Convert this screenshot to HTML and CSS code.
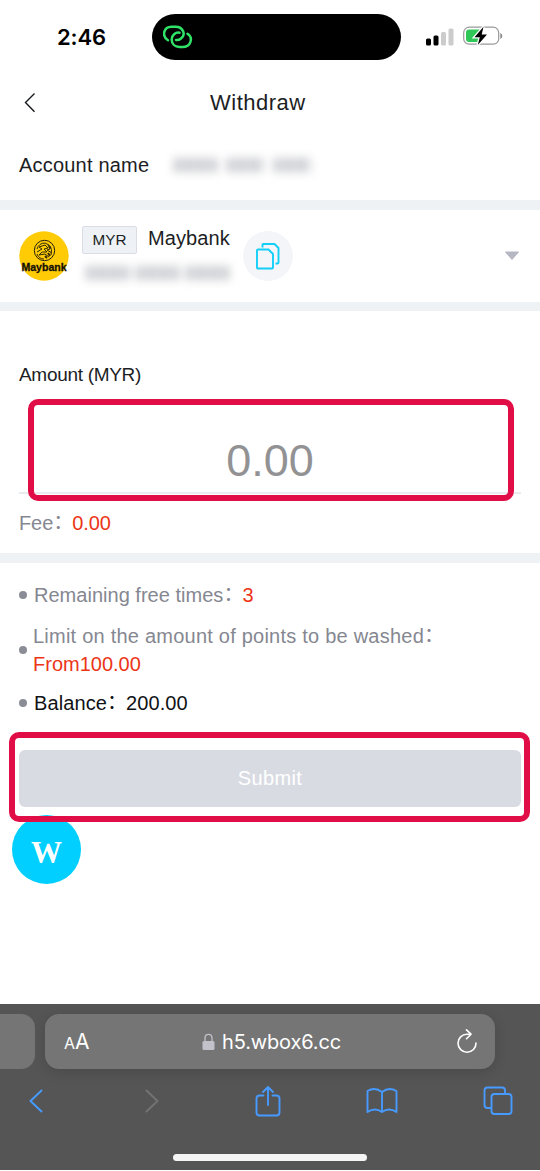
FILE: index.html
```html
<!DOCTYPE html>
<html lang="en">
<head>
<meta charset="utf-8">
<title>Withdraw</title>
<link rel="stylesheet" href="styles.css">
</head>
<body>
<div class="phone">
  <header class="status">
    <span class="time">2:46</span>
    <div class="island">
      <svg width="30" height="24" viewBox="0 0 30 24" fill="none" stroke="#30e266" stroke-width="2.500" stroke-linecap="round">
        <path d="M5 15.300 C-1.500 11 .5 1.700 8.500 1.700 H12.500 C20.500 1.700 23 10 18 13.500 C16.500 14.800 14.500 15.200 13 15"/>
        <path d="M16.500 7.700 C12.500 7 8.700 10.200 8.700 14.500 C8.700 19 12 22 16.500 22 H19.500 C28 22 30.500 12.500 24.500 8.700"/>
      </svg>
    </div>
    <svg class="signal" width="28" height="18" viewBox="0 0 28 18">
      <rect x="0" y="10.500" width="5" height="7" rx="1.500"/><rect x="7.500" y="7.500" width="5" height="10" rx="1.500"/>
      <g fill="#ccc"><rect x="15" y="4" width="5" height="13.500" rx="1.500"/><rect x="22.500" y="0.500" width="5" height="17" rx="1.500"/></g>
    </svg>
    <svg class="battery" width="40" height="22" viewBox="0 0 40 22">
      <rect x=".7" y="2.200" width="35" height="17" rx="5.500" fill="none" stroke="#999" stroke-width="1.200"/>
      <path d="M37.300 8 Q39.300 9 39.300 11 T37.300 14Z" fill="#888"/>
      <path d="M6 4.500 H17 V17 H6 Q3 17 3 14 V7.500 Q3 4.500 6 4.500Z" fill="#30c759"/>
      <path d="M20.500 1.800 L11.500 12.300 H16.800 L14.800 20 L24 9.600 H18.700Z" fill="#000" stroke="#fff" stroke-width="2.600" paint-order="stroke"/>
    </svg>
  </header>

  <nav class="titlebar">
    <svg class="back" width="14" height="20" viewBox="0 0 14 20"><path d="M11.500 .5 L2.500 9.500 L11.500 18.700" fill="none" stroke="#15171c" stroke-width="1.400"/></svg>
    <h1>Withdraw</h1>
  </nav>

  <section class="account">
    <span class="account-label">Account name</span>
    <span class="redacted name"><i></i><i></i><i></i></span>
  </section>

  <section class="bank">
    <svg class="bank-logo" width="50" height="50" viewBox="0 0 50 50">
      <circle cx="25" cy="25" r="24.700" fill="#ffcb05"/>
      <circle cx="25.500" cy="19.500" r="10.200" fill="none" stroke="#242010" stroke-width="1"/>
      <g fill="none" stroke="#332a08" stroke-width="1">
        <path d="M18 18 Q20 12 26 12 L30 14 Q34 18 32 24 M18 21 L23 18 L20 16 L26 14 L29 17 L25 18 L28 21 L23 21 L20 24 L26 23 L30 26 M29 14 L31 18 L28 19 L33 22 M18 23 Q20 28 25 28"/>
        <path d="M30 17 L32 16 M29 22 L31 25 M26 25 L28 27" stroke-width="2"/>
      </g>
      <text x="25" y="39.700" text-anchor="middle" textLength="45" lengthAdjust="spacingAndGlyphs" class="logo-text">Maybank</text>
    </svg>
    <div class="bank-info">
      <div class="bank-line"><span class="currency">MYR</span><span class="bank-name">Maybank</span></div>
      <span class="redacted number"><i></i><i></i><i></i></span>
    </div>
    <div class="copy">
      <svg width="24" height="27" viewBox="0 0 24 27" fill="none" stroke="#12cff8" stroke-width="1.900" stroke-linejoin="round">
        <path d="M1 7.500 Q1 6.500 2 6.500 H12.500 L17 11 V24.500 Q17 25.500 16 25.500 H2 Q1 25.500 1 24.500Z"/>
        <path d="M6.500 4.500 V2 Q6.500 1 7.500 1 H18.500 L22.500 5 V19.500 Q22.500 20.500 21.500 20.500 H19.500"/>
      </svg>
    </div>
    <svg class="caret" width="16" height="10" viewBox="0 0 16 10"><path d="M1.500 1 H14.500 L8 8.500Z" fill="#b5b7c2" stroke="#b5b7c2" stroke-linejoin="round"/></svg>
  </section>

  <section class="amount">
    <div class="amount-label">Amount (MYR)</div>
    <div class="amount-value">0.00<div class="frame frame-amount"></div></div>
    <div class="fee">Fee<span class="colon">：</span><b>0.00</b></div>
  </section>

  <main class="details">
    <ul>
      <li class="row-free"><span>Remaining free times<span class="colon">：</span><b>3</b></span></li>
      <li class="row-limit"><span><span class="limit-text">Limit on the amount of points to be washed</span><span class="colon">：</span><br><b class="from">From100.00</b></span></li>
      <li class="row-balance"><span>Balance<span class="colon">：</span><span class="balance">200.00</span></span></li>
    </ul>
    <div class="submit">Submit<div class="frame frame-submit"></div></div>
    <div class="float">W</div>
  </main>

  <footer class="browser">
    <div class="tabs">
      <div class="tab-prev"></div>
      <div class="address">
        <span class="aa"><small>A</small>A</span>
        <span class="url">
          <svg width="13" height="18" viewBox="0 0 13 18"><rect x=".5" y="8" width="12" height="9" rx="1.500" fill="#c3c1c9"/><path d="M3 8 V5 Q3 1.300 6.500 1.300 T10 5 V8" fill="none" stroke="#c3c1c9" stroke-width="1.300"/></svg>
          <span>h5.wbox6.cc</span>
        </span>
        <svg class="reload" width="22" height="25" viewBox="0 0 22 25" fill="none" stroke="#fff" stroke-width="1.600" stroke-linecap="round" stroke-linejoin="round"><path d="M14 5.200 H11 A9 9 0 1 0 20 14"/><path d="M10.500 .9 L15 5.200 L10.500 9.700"/></svg>
      </div>
    </div>
    <div class="toolbar">
      <svg width="16" height="26" viewBox="0 0 16 26"><path d="M13.500 2.500 L2.500 13 L13.500 23.500"/></svg>
      <svg class="dim" width="16" height="26" viewBox="0 0 16 26"><path d="M2.500 2.500 L13.500 13 L2.500 23.500"/></svg>
      <svg class="share" width="26" height="32" viewBox="0 0 26 32"><path d="M8.500 10.500 H4.500 Q1.500 10.500 1.500 13.500 V27.500 Q1.500 30.500 4.500 30.500 H21.500 Q24.500 30.500 24.500 27.500 V13.500 Q24.500 10.500 21.500 10.500 H17.500 M13 20 V2 M8 7 L13 2 L18 7"/></svg>
      <svg width="32" height="28" viewBox="0 0 32 28"><path d="M16 5 Q9 -.5 1.500 4 V25 Q9 20 16 25 Q23 20 30.500 25 V4 Q23 -.5 16 5 V25"/></svg>
      <svg width="30" height="30" viewBox="0 0 30 30"><rect x="8.500" y="8" width="20" height="20" rx="3"/><path d="M8 22 H4.500 Q1.500 22 1.500 19 V4.500 Q1.500 1.500 4.500 1.500 H19 Q22 1.500 22 4.500 V8"/></svg>
    </div>
    <div class="home"></div>
  </footer>
</div>
</body>
</html>
```

FILE: styles.css
```css
* { box-sizing: border-box; }
body { margin: 0; background: #fff; font-family: "Liberation Sans", Arial, "Noto Sans CJK SC", sans-serif; color: #1c1e24; }
svg { display: block; flex: none; }
b { font-weight: 400; color: #ec3517; }
.phone { width: 540px; height: 1171px; display: flex; flex-direction: column; overflow: hidden; white-space: nowrap; }

.status { height: 74px; flex: none; display: flex; align-items: center; }
.time { width: 152px; padding-left: 57px; font: 600 22px Inter, sans-serif; letter-spacing: -.1px; color: #000; }
.island { width: 249px; height: 46px; border-radius: 23px; background: #000; padding: 11px; }
.signal { margin-left: 25px; }
.battery { margin-left: 9px; margin-top: -2px; }

.titlebar { height: 57px; flex: none; display: flex; align-items: center; padding-left: 23px; }
.titlebar h1 { margin: 0 0 0 173px; font-size: 22px; font-weight: 400; letter-spacing: .5px; }

.account { height: 69px; flex: none; display: flex; padding: 23px 19px 0; font-size: 20px; line-height: 23px; }
.account-label { width: 155px; letter-spacing: .2px; }
.redacted { display: flex; filter: blur(5px); }
.redacted i { height: 14px; background: repeating-linear-gradient(90deg, #c6c7cc 0 7px, #e4e5e8 7px 12px); }
.name { gap: 10px; padding-top: 4px; }
.name i { width: 43px; }
.name i:nth-child(n+2) { width: 37px; }

.bank { height: 111px; flex: none; border: solid #eef2f5; border-width: 10px 0 9px; display: flex; align-items: center; padding-left: 19px; }
.bank-logo { overflow: visible; }
.logo-text { font: 700 10.5px "Liberation Sans", sans-serif; fill: #141005; stroke: #141005; stroke-width: .3px; }
.bank-info { width: 161px; margin-left: 13px; height: 60px; }
.bank-line { display: flex; }
.currency { width: 55px; height: 28px; border: 1px solid #d9dde3; border-radius: 2px; background: #eef2f6; font-size: 15.300px; line-height: 26px; text-align: center; }
.bank-name { margin-left: 11px; font-size: 20px; line-height: 24px; letter-spacing: .1px; }
.number { gap: 7px; margin: 12px 0 0 4px; height: 13px; }
.number i { width: 43px; }
.copy { width: 50px; height: 50px; border-radius: 50%; background: #f4f5f8; display: flex; align-items: center; justify-content: center; }
.caret { margin-left: 211px; }

.amount { height: 252px; flex: none; border-bottom: 10px solid #eef2f5; padding: 53px 19px 0; }
.amount-label { height: 32px; font-size: 19px; line-height: 22px; letter-spacing: -.3px; }
.amount-value { height: 98px; border-bottom: 2px solid #e8ecef; position: relative; font-size: 45px; line-height: 50px; padding-top: 40px; text-align: center; color: #929294; }
.frame { position: absolute; border: 6px solid #e10d46; border-radius: 10px; }
.frame-amount { left: 9px; top: 3px; width: 486px; height: 102px; }
.fee { padding-top: 17px; font-size: 20px; line-height: 24px; letter-spacing: -.1px; color: #858791; }
.colon { display: inline-block; width: 19px; line-height: 20px; vertical-align: 1px; font-family: "Noto Sans CJK SC", sans-serif; }

.details { flex: 1; padding: 18px 19px 0; font-size: 20px; color: #858791; }
.details ul { margin: 0; padding: 0; list-style: none; }
.details li { display: flex; align-items: center; gap: 7px; line-height: 28px; }
.details li::before { content: ""; width: 8px; height: 8px; border-radius: 50%; background: #8b8d96; }
.row-free { height: 28px; margin-bottom: 13px; letter-spacing: .02px; }
.row-limit { height: 56px; margin-bottom: 11px; }
.details .row-limit { gap: 6px; }
.limit-text { letter-spacing: .23px; }
.row-balance { height: 28px; color: #101216; letter-spacing: .1px; }
.submit { position: relative; z-index: 2; height: 57px; margin-top: 33px; border-radius: 6px; background: #d9dbe3; color: #fff; text-align: center; line-height: 57px; letter-spacing: .35px; }
.frame-submit { left: -10px; top: -18px; width: 521px; height: 90px; }
.float { width: 69px; height: 69px; margin: 8px 0 0 -7px; border-radius: 50%; background: #00cfff; color: #fff; text-align: center; font: 700 31px/75px "Liberation Serif", serif; }

.browser { height: 166px; flex: none; margin-bottom: 1px; background: #555; }
.tabs { display: flex; gap: 10px; padding-top: 10px; }
.tab-prev { width: 35px; height: 55px; border-radius: 0 14px 14px 0; background: #757575; }
.address { width: 450px; height: 55px; border-radius: 14px; background: #757575; box-shadow: 0 3px 14px rgba(0,0,0,.14); display: flex; align-items: center; padding: 0 17px 0 19px; color: #fff; }
.aa { width: 138px; font: 21px Inter, sans-serif; }
.aa small { font-size: 16px; }
.url { display: flex; gap: 7px; align-items: center; font: 20px Inter, sans-serif; letter-spacing: -.15px; }
.reload { margin-left: auto; }
.toolbar { width: 576px; height: 64px; margin-left: -21px; display: grid; grid-template-columns: 114px 118px 113px 116px 115px; align-items: center; justify-items: center; }
.toolbar svg { fill: none; stroke: #479aff; stroke-width: 1.900; stroke-linecap: round; stroke-linejoin: round; }
.toolbar .dim { stroke: #737373; }
.home { width: 194px; height: 7px; margin: 21px auto 0; border-radius: 4px; background: #f5f5f5; }
```
